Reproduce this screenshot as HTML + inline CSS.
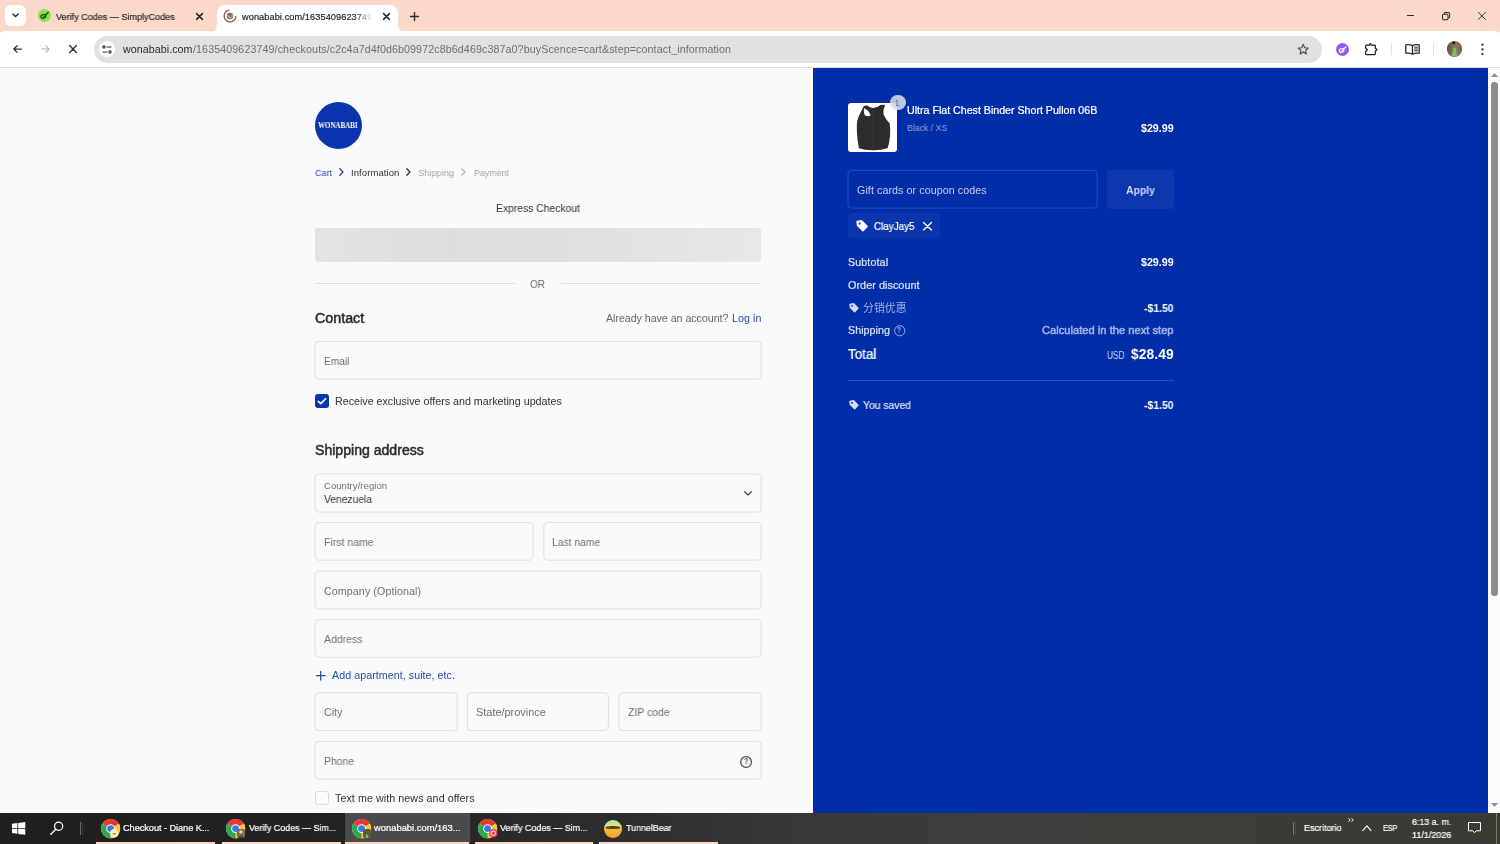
<!DOCTYPE html>
<html lang="en">
<head>
<meta charset="utf-8">
<title>Checkout - wonababi.com</title>
<style>

*{box-sizing:border-box;margin:0;padding:0}
html,body{width:1500px;height:844px;overflow:hidden;background:#f9fafc;font-family:"Liberation Sans",sans-serif}
body{position:relative}
.abs,.t,.box,svg{position:absolute}
.t{white-space:pre;display:block;transform-origin:0 50%;will-change:transform}
svg{overflow:visible}
/* browser chrome */
#tabstrip{left:0;top:0;width:1500px;height:32px;background:#fbd9ca}
#toolbar{left:0;top:31.2px;width:1500px;height:35.8px;background:#fff;border-radius:5px 5px 0 0}
#tbline{left:0;top:67px;width:1500px;height:1px;background:#dddde0}
#tabsearch{left:5px;top:5px;width:21px;height:21px;border-radius:6px;background:#fff}
#activetab{left:217px;top:5px;width:181px;height:28px;background:#fff;border-radius:8px 8px 0 0}
#omnibox{left:94px;top:36px;width:1228px;height:26.5px;border-radius:13.25px;background:#e1e1e1}
#siteinfo{left:98.8px;top:40.6px;width:16.6px;height:16.6px;border-radius:50%;background:#fff}
.sep{width:1px;height:12px;top:43px;background:#fad6c6}
/* page */
#main{left:0;top:68px;width:813px;height:745px;background:#f9fafc}
#aside{left:813px;top:68px;width:675px;height:745px;background:#002da8}
#scroll{left:1488px;top:68px;width:12px;height:745px;background:#fcfcfc}
#thumb{left:1491px;top:82px;width:6.5px;height:514px;border-radius:3.25px;background:#8c8b8d}
.box{border:1px solid #dfe0e2;border-radius:4px;background:#f9fafc}
#skel{left:315px;top:228.4px;width:446.4px;height:34px;border-radius:3px;background:linear-gradient(90deg,#e2e3e5 0%,#dcdddf 30%,#dfe0e2 62%,#e6e7e9 100%)}
.hr{height:1px;background:#dcdde0}
#logo{left:314.5px;top:102.3px;width:47px;height:47px;border-radius:50%;background:#0a34ad}
.cb{left:315px;width:14px;height:14px;border-radius:3px}
/* aside */
#pimg{left:848px;top:103px;width:49px;height:48.8px;border-radius:3px;background:#fff;overflow:hidden}
#badge{left:890.2px;top:94.6px;width:15.6px;height:15.6px;border-radius:50%;background:rgba(214,219,238,.88)}
#coupon{left:847.6px;top:170px;width:250px;height:39px;border:1px solid #2249b9;border-radius:4px}
#apply{left:1107px;top:170px;width:66.6px;height:39px;border-radius:3px;background:#0c37ad}
#chip{left:848px;top:213px;width:91.7px;height:24.6px;border-radius:3px;background:#0a35ac}
#adiv{left:848px;top:380px;width:325.6px;height:1px;background:#2a51bd}
/* taskbar */
#taskbar{left:0;top:813px;width:1500px;height:31px;background:linear-gradient(90deg,#1f1f1f 0%,#232323 22%,#2e2e2e 42%,#393939 55%,#3d3d3c 66%,#3c3c38 82%,#3a3b33 100%)}
#tbactive{left:344.5px;top:813px;width:125px;height:31px;background:#4b4b4b}
.ul{top:842px;height:2px;background:#f9d9c4}
.tsep{width:1px;height:12.5px;top:822px;background:#6a6a66}

</style>
</head>
<body>
<div id="tabstrip" class="abs"></div>
<div id="toolbar" class="abs"></div>
<div id="tbline" class="abs"></div>
<div id="tabsearch" class="abs"></div>
<svg style="left:12.3px;top:13.3px" width="7" height="5" viewBox="0 0 7 5"><path d="M0.8 0.9 L3.5 3.6 L6.2 0.9" fill="none" stroke="#2b2b2b" stroke-width="1.4" stroke-linecap="round" stroke-linejoin="round"/></svg>
<svg style="left:37.5px;top:9.2px" width="13" height="13" viewBox="0 0 13 13"><circle cx="6.5" cy="6.5" r="6.5" fill="#8be04e"/><ellipse cx="5.4" cy="7.4" rx="2.5" ry="1.9" fill="none" stroke="#1f5c12" stroke-width="1.3" transform="rotate(-20 5.4 7.4)"/><path d="M5.6 8.2 L10.2 3.2" stroke="#1f5c12" stroke-width="1.5" stroke-linecap="round"/></svg>
<span class="t" style="left:56.30px;top:11.00px;font-size:9.2px;line-height:12px;letter-spacing:0.000px;color:#2e2b2a;-webkit-text-stroke:0.22px #2e2b2a;transform:scaleX(0.9849);">Verify Codes — SimplyCodes</span>
<svg style="left:196.2px;top:12.5px" width="7" height="7" viewBox="0 0 7 7"><path d="M0.6 0.6 L6.4 6.4 M6.4 0.6 L0.6 6.4" stroke="#262626" stroke-width="1.5" stroke-linecap="round"/></svg>
<div id="activetab" class="abs"></div>
<svg style="left:209px;top:25px" width="8" height="8" viewBox="0 0 8 8"><path d="M8 0 L8 8 L0 8 A8 8 0 0 0 8 0 Z" fill="#fff"/></svg>
<svg style="left:398px;top:25px" width="8" height="8" viewBox="0 0 8 8"><path d="M0 0 L0 8 L8 8 A8 8 0 0 1 0 0 Z" fill="#fff"/></svg>
<svg style="left:222.7px;top:8.7px" width="14" height="14" viewBox="-7 -7 14 14"><path d="M-1 -5.8 A5.9 5.9 0 1 0 5.9 0.4" fill="none" stroke="#9b5b2f" stroke-width="1.3" stroke-linecap="round"/><circle r="3.3" fill="#6a6f76"/><path d="M-2.6 -1.2 Q-0.6 -0.2 -1.2 1.4 Q-0.2 2.4 1 1.6 Q2.6 0.8 2.2 -1.4" fill="none" stroke="#dfe3e8" stroke-width="0.9"/></svg>
<span class="t" style="left:242.20px;top:11.00px;font-size:9.2px;line-height:12px;letter-spacing:0.083px;color:#2a2a2a;-webkit-text-stroke:0.22px #2a2a2a;">wonababi.com/1635409623749</span>
<div class="abs" style="left:354px;top:8px;width:22px;height:17px;background:linear-gradient(90deg,rgba(255,255,255,0),#fff 85%)"></div>
<svg style="left:382.5px;top:12.5px" width="7" height="7" viewBox="0 0 7 7"><path d="M0.6 0.6 L6.4 6.4 M6.4 0.6 L0.6 6.4" stroke="#262626" stroke-width="1.5" stroke-linecap="round"/></svg>
<svg style="left:409.5px;top:11.5px" width="9" height="9" viewBox="0 0 9 9"><path d="M4.5 0.5 V8.5 M0.5 4.5 H8.5" stroke="#2b2b2b" stroke-width="1.4" stroke-linecap="round"/></svg>
<div class="abs" style="left:1406.5px;top:15px;width:7.6px;height:1px;background:#303030"></div>
<svg style="left:1442px;top:12px" width="8.2" height="8.2" viewBox="0 0 9 9"><rect x="0.6" y="2.4" width="6" height="6" rx="1.2" fill="none" stroke="#2b2b2b" stroke-width="1.1"/><path d="M2.6 2.2 V1.6 Q2.6 0.6 3.6 0.6 H7.2 Q8.4 0.6 8.4 1.8 V5.4 Q8.4 6.4 7.4 6.4 H6.8" fill="none" stroke="#2b2b2b" stroke-width="1.1"/></svg>
<svg style="left:1478.3px;top:12.1px" width="7.8" height="7.8" viewBox="0 0 9 9"><path d="M0.5 0.5 L8.5 8.5 M8.5 0.5 L0.5 8.5" stroke="#2b2b2b" stroke-width="1.1" stroke-linecap="round"/></svg>
<svg style="left:12.7px;top:45px" width="9" height="8.1" viewBox="0 0 10 9"><path d="M9.4 4.5 H1 M4.6 0.8 L0.9 4.5 L4.6 8.2" fill="none" stroke="#303030" stroke-width="1.4" stroke-linecap="round" stroke-linejoin="round"/></svg>
<svg style="left:40.7px;top:45px" width="9" height="8.1" viewBox="0 0 10 9"><path d="M0.6 4.5 H9 M5.4 0.8 L9.1 4.5 L5.4 8.2" fill="none" stroke="#b4b4b4" stroke-width="1.2" stroke-linecap="round" stroke-linejoin="round"/></svg>
<svg style="left:69.3px;top:45px" width="8" height="8" viewBox="0 0 8 8"><path d="M0.6 0.6 L7.4 7.4 M7.4 0.6 L0.6 7.4" stroke="#303030" stroke-width="1.4" stroke-linecap="round"/></svg>
<div id="omnibox" class="abs"></div>
<div id="siteinfo" class="abs"></div>
<svg style="left:102px;top:44.6px" width="10" height="9" viewBox="0 0 10 9"><circle cx="1.9" cy="2" r="1.1" fill="none" stroke="#303030" stroke-width="1.1"/><path d="M4.9 2 H9" stroke="#303030" stroke-width="1.2" stroke-linecap="round"/><circle cx="8" cy="7" r="1.1" fill="none" stroke="#303030" stroke-width="1.1"/><path d="M1 7 H5" stroke="#303030" stroke-width="1.2" stroke-linecap="round"/></svg>
<span class="t" style="left:123.10px;top:42.00px;font-size:10.7px;line-height:14px;letter-spacing:0.053px;color:#2a2a2e;">wonababi.com</span>
<span class="t" style="left:192.90px;top:42.00px;font-size:10.7px;line-height:14px;letter-spacing:0.096px;color:#6f6f72;">/1635409623749/checkouts/c2c4a7d4f0d6b09972c8b6d469c387a0?buyScence=cart&amp;step=contact_information</span>
<svg style="left:1297px;top:43px" width="12.5" height="12.5" viewBox="0 0 24 24"><path d="M12 2.6 L14.8 9 L21.7 9.6 L16.5 14.2 L18 21 L12 17.4 L6 21 L7.5 14.2 L2.3 9.6 L9.2 9 Z" fill="none" stroke="#444" stroke-width="2" stroke-linejoin="round"/></svg>
<svg style="left:1335.5px;top:42.8px" width="13" height="13" viewBox="0 0 13 13"><circle cx="6.5" cy="6.5" r="6.5" fill="#8f5cf2"/><ellipse cx="5.6" cy="7.5" rx="2.3" ry="1.8" fill="none" stroke="#fff" stroke-width="1.1" transform="rotate(-20 5.6 7.5)"/><path d="M5.8 8.2 L9.8 3.8" stroke="#fff" stroke-width="1.2" stroke-linecap="round"/></svg>
<svg style="left:1364px;top:41.5px" width="14" height="14" viewBox="0 0 14 14"><path d="M2.4 3.1 H5.5 Q5.6 1.7 6.4 1.7 Q7.2 1.7 7.3 3.1 H10.6 Q11.4 3.1 11.4 3.9 V6.7 Q12.9 6.8 12.9 7.8 Q12.9 8.8 11.4 8.9 V11.8 Q11.400 12.600 10.600 12.600 H2.400 Q1.600 12.600 1.600 11.800 V9.600 L3.300 7.800 L1.600 6 V3.900 Q1.600 3.100 2.400 3.100 Z" fill="none" stroke="#262626" stroke-width="1.3" stroke-linejoin="round"/></svg>
<div class="abs sep" style="left:1391px"></div>
<svg style="left:1405px;top:43.5px" width="15" height="11" viewBox="0 0 15 11"><path d="M7.5 1.6 Q4.6 0.2 0.8 0.9 V9.2 Q4.6 8.6 7.5 10.2 Q10.4 8.6 14.2 9.2 V0.9 Q10.4 0.2 7.5 1.6 Z M7.5 1.6 V10" fill="none" stroke="#2b2b2b" stroke-width="1.3" stroke-linejoin="round"/><path d="M9.2 3.2 H12.9 M9.2 5 H12.900 M9.200 6.800 H12.900" stroke="#2b2b2b" stroke-width="1"/></svg>
<div class="abs sep" style="left:1433px"></div>
<div class="abs" style="left:1447px;top:41.4px;width:15.4px;height:15.4px;border-radius:50%;overflow:hidden;background:linear-gradient(90deg,#5b4c3c 0%,#7a6a55 32%,#8f7759 68%,#6d5b47 100%)"><svg style="left:0;top:0" width="15.4" height="15.4" viewBox="0 0 15.4 15.4"><path d="M6.300 6.400 L8.700 6.400 L10.200 15.400 L4.600 15.400 Z" fill="#79bd60"/><ellipse cx="6.8" cy="1.900" rx="1.500" ry="1.600" fill="#241a14"/><path d="M6.200 3.200 L8 3.200 L8.600 6.400 L6.300 6.400 Z" fill="#8b7a66"/></svg></div>
<svg style="left:1481px;top:43.2px" width="3" height="13" viewBox="0 0 3 13"><circle cx="1.5" cy="1.7" r="1.15" fill="#2b2b2b"/><circle cx="1.5" cy="6.4" r="1.15" fill="#2b2b2b"/><circle cx="1.5" cy="11.1" r="1.15" fill="#2b2b2b"/></svg>
<div id="main" class="abs"></div>
<svg style="left:0;top:0" width="1500" height="844" fill="none"><rect x="315.10" y="341.40" width="446.10" height="37.60" rx="3.6" stroke="#d8d9dc" stroke-width="0.8"/><rect x="315.10" y="474.00" width="446.10" height="38.10" rx="3.6" stroke="#d8d9dc" stroke-width="0.8"/><rect x="315.10" y="522.50" width="217.90" height="37.70" rx="3.6" stroke="#d8d9dc" stroke-width="0.8"/><rect x="543.80" y="522.50" width="217.40" height="37.70" rx="3.6" stroke="#d8d9dc" stroke-width="0.8"/><rect x="315.10" y="571.10" width="446.10" height="37.80" rx="3.6" stroke="#d8d9dc" stroke-width="0.8"/><rect x="315.10" y="619.60" width="446.10" height="37.60" rx="3.6" stroke="#d8d9dc" stroke-width="0.8"/><rect x="315.10" y="692.80" width="142.10" height="37.80" rx="3.6" stroke="#d8d9dc" stroke-width="0.8"/><rect x="467.40" y="692.80" width="141.00" height="37.80" rx="3.6" stroke="#d8d9dc" stroke-width="0.8"/><rect x="619.00" y="692.80" width="142.20" height="37.80" rx="3.6" stroke="#d8d9dc" stroke-width="0.8"/><rect x="315.10" y="741.40" width="446.10" height="37.60" rx="3.6" stroke="#d8d9dc" stroke-width="0.8"/></svg>
<div id="logo" class="abs"></div>
<span class="t" style="left:318.40px;top:120.00px;font-size:7.6px;line-height:11px;letter-spacing:0.000px;color:#fff;font-weight:700;font-family:'Liberation Serif', serif;transform:scaleX(0.9199);">WONABABI</span>
<span class="t" style="left:314.50px;top:166.00px;font-size:9.5px;line-height:13px;letter-spacing:0.000px;color:#2b4aa3;transform:scaleX(0.9469);">Cart</span>
<svg style="left:338.6px;top:168.2px" width="5" height="8" viewBox="0 0 5 8"><path d="M0.8 0.8 L4 4 L0.8 7.2" fill="none" stroke="#2b4aa3" stroke-width="1.4" stroke-linecap="round" stroke-linejoin="round"/></svg>
<span class="t" style="left:350.60px;top:166.00px;font-size:9.5px;line-height:13px;letter-spacing:0.077px;color:#333333;">Information</span>
<svg style="left:405.7px;top:168.2px" width="5" height="8" viewBox="0 0 5 8"><path d="M0.8 0.8 L4 4 L0.8 7.2" fill="none" stroke="#333" stroke-width="1.4" stroke-linecap="round" stroke-linejoin="round"/></svg>
<span class="t" style="left:417.80px;top:166.00px;font-size:9.5px;line-height:13px;letter-spacing:0.000px;color:#a4a5ab;transform:scaleX(0.9761);">Shipping</span>
<svg style="left:461.2px;top:168.2px" width="5" height="8" viewBox="0 0 5 8"><path d="M0.8 0.8 L4 4 L0.8 7.2" fill="none" stroke="#a4a5ab" stroke-width="1.1" stroke-linecap="round" stroke-linejoin="round"/></svg>
<span class="t" style="left:473.60px;top:166.00px;font-size:9.5px;line-height:13px;letter-spacing:0.000px;color:#a4a5ab;transform:scaleX(0.9307);">Payment</span>
<span class="t" style="left:495.60px;top:201.00px;font-size:10.7px;line-height:14px;letter-spacing:0.000px;color:#333333;transform:scaleX(0.9685);">Express Checkout</span>
<div id="skel" class="abs"></div>
<div class="abs hr" style="left:315px;top:283px;width:199.5px"></div>
<div class="abs hr" style="left:560.5px;top:283px;width:200.5px"></div>
<span class="t" style="left:530.00px;top:277.00px;font-size:10.7px;line-height:14px;letter-spacing:0.000px;color:#6a6a6a;transform:scaleX(0.9357);">OR</span>
<span class="t" style="left:314.80px;top:310.00px;font-size:13.8px;line-height:17px;letter-spacing:0.000px;color:#2b2b2b;-webkit-text-stroke:0.5px #2b2b2b;transform:scaleX(1.0344);">Contact</span>
<span class="t" style="left:605.60px;top:311.00px;font-size:10.7px;line-height:14px;letter-spacing:-0.052px;color:#666;">Already have an account?</span>
<span class="t" style="left:731.60px;top:311.00px;font-size:10.7px;line-height:14px;letter-spacing:0.055px;color:#2b4aa3;">Log in</span>
<span class="t" style="left:324.00px;top:354.00px;font-size:10.7px;line-height:14px;letter-spacing:0.000px;color:#707070;transform:scaleX(0.9501);">Email</span>
<div class="abs cb" style="top:394px;background:#0a34ad"></div>
<svg style="left:315px;top:394px" width="14" height="14" viewBox="0 0 14 14"><path d="M3.2 7.3 L5.8 9.6 L10.7 4.7" fill="none" stroke="#fff" stroke-width="1.6" stroke-linecap="round" stroke-linejoin="round"/></svg>
<span class="t" style="left:334.90px;top:394.00px;font-size:10.7px;line-height:14px;letter-spacing:0.000px;color:#333333;">Receive exclusive offers and marketing updates</span>
<span class="t" style="left:314.80px;top:442.00px;font-size:13.8px;line-height:17px;letter-spacing:0.000px;color:#2b2b2b;-webkit-text-stroke:0.5px #2b2b2b;transform:scaleX(1.0204);">Shipping address</span>
<span class="t" style="left:324.00px;top:479.00px;font-size:9.5px;line-height:13px;letter-spacing:0.053px;color:#707070;">Country/region</span>
<span class="t" style="left:324.00px;top:492.00px;font-size:10.7px;line-height:14px;letter-spacing:0.000px;color:#333333;transform:scaleX(0.9615);">Venezuela</span>
<svg style="left:744.2px;top:490.6px" width="8" height="5" viewBox="0 0 8 5"><path d="M0.7 0.7 L4 4 L7.3 0.7" fill="none" stroke="#444" stroke-width="1.3" stroke-linecap="round" stroke-linejoin="round"/></svg>
<span class="t" style="left:324.00px;top:535.00px;font-size:10.7px;line-height:14px;letter-spacing:0.000px;color:#707070;transform:scaleX(0.9825);">First name</span>
<span class="t" style="left:552.40px;top:535.00px;font-size:10.7px;line-height:14px;letter-spacing:0.000px;color:#707070;transform:scaleX(0.9658);">Last name</span>
<span class="t" style="left:324.00px;top:584.00px;font-size:10.7px;line-height:14px;letter-spacing:0.080px;color:#707070;">Company (Optional)</span>
<span class="t" style="left:324.00px;top:632.00px;font-size:10.7px;line-height:14px;letter-spacing:0.000px;color:#707070;transform:scaleX(0.9791);">Address</span>
<svg style="left:315.6px;top:670.7px" width="9.4" height="9.4" viewBox="0 0 9.4 9.4"><path d="M4.7 0.4 V9 M0.4 4.7 H9" stroke="#2b4aa3" stroke-width="1.3" stroke-linecap="round"/></svg>
<span class="t" style="left:332.00px;top:668.00px;font-size:10.7px;line-height:14px;letter-spacing:0.048px;color:#2b4aa3;">Add apartment, suite, etc.</span>
<span class="t" style="left:324.00px;top:705.00px;font-size:10.7px;line-height:14px;letter-spacing:0.000px;color:#707070;transform:scaleX(0.9779);">City</span>
<span class="t" style="left:475.60px;top:705.00px;font-size:10.7px;line-height:14px;letter-spacing:0.000px;color:#707070;transform:scaleX(1.0215);">State/province</span>
<span class="t" style="left:628.00px;top:705.00px;font-size:10.7px;line-height:14px;letter-spacing:0.000px;color:#707070;transform:scaleX(0.9770);">ZIP code</span>
<span class="t" style="left:324.00px;top:754.00px;font-size:10.7px;line-height:14px;letter-spacing:0.000px;color:#707070;transform:scaleX(0.9707);">Phone</span>
<svg style="left:740px;top:755.7px" width="12.2" height="12.2" viewBox="0 0 12.2 12.2"><circle cx="6.1" cy="6.1" r="5.4" fill="none" stroke="#505050" stroke-width="1.3"/></svg>
<span class="t" style="left:744.10px;top:756.00px;font-size:8.2px;line-height:11px;letter-spacing:0.000px;color:#4a4a4a;font-weight:700;transform:scaleX(0.8374);">?</span>
<div class="abs cb" style="top:791px;background:#fdfdfe;border:1px solid #dadbde"></div>
<span class="t" style="left:334.80px;top:791.00px;font-size:10.7px;line-height:14px;letter-spacing:0.073px;color:#333333;">Text me with news and offers</span>
<div id="aside" class="abs"></div>
<div id="pimg" class="abs"><svg style="left:0;top:0" width="49" height="49" viewBox="0 0 49 49"><path d="M15.9 2.9 Q17.5 2.2 19.2 2.6 Q22 5.2 25.5 5 Q29.5 4.4 32.5 2.1 Q35 1.4 37.1 1.9 Q34.8 7 35.5 11.2 Q37.5 16.5 41.6 20.3 Q42.6 27 42 33.6 Q41.4 40 39.6 45.2 Q32 47.6 25 47.3 Q17 47.4 10.9 45.2 Q9.2 37 8.9 28.6 Q8.6 22 9.3 17.8 Q10.6 12.5 13 8.7 Q14.4 5.5 15.9 2.9 Z" fill="#2c2c2e"/><path d="M16 5.2 Q15.4 9 16.7 12 Q18.8 13.6 20.9 13.3 Q22.2 12.9 22.6 12 Q21.6 9 19.2 7 Q17.4 5.6 16 5.2 Z" fill="#fff"/><path d="M25 8 Q24 28 26 46" stroke="#3a3a3d" stroke-width="1.2" fill="none" opacity=".6"/></svg></div>
<div id="badge" class="abs"></div>
<span class="t" style="left:895.40px;top:97.00px;font-size:9.2px;line-height:12px;letter-spacing:-0.625px;color:#4d5572;transform:scaleX(0.8000);">1</span>
<span class="t" style="left:906.70px;top:103.00px;font-size:10.7px;line-height:14px;letter-spacing:-0.025px;color:#fff;-webkit-text-stroke:0.22px #fff;">Ultra Flat Chest Binder Short Pullon 06B</span>
<span class="t" style="left:906.70px;top:122.00px;font-size:9.3px;line-height:12px;letter-spacing:0.000px;color:#93a4dd;transform:scaleX(0.9396);">Black / XS</span>
<span class="t" style="left:1141.00px;top:121.00px;font-size:10.7px;line-height:14px;letter-spacing:-0.021px;color:#fff;font-weight:700;">$29.99</span>
<svg style="left:0;top:0" width="1500" height="300" fill="none"><rect x="848.0" y="170.4" width="249.2" height="37.7" rx="3.6" stroke="#2f55c2" stroke-width="0.8"/></svg>
<span class="t" style="left:856.70px;top:183.00px;font-size:10.7px;line-height:14px;letter-spacing:0.079px;color:#c6cfee;">Gift cards or coupon codes</span>
<div id="apply" class="abs"></div>
<span class="t" style="left:1126.00px;top:183.00px;font-size:10.7px;line-height:14px;letter-spacing:0.000px;color:#cfd8f6;font-weight:700;transform:scaleX(0.9763);">Apply</span>
<div id="chip" class="abs"></div>
<svg style="left:855.7px;top:220.0px" width="12" height="12" viewBox="0 0 12 12"><path d="M0.4 1.6 Q0.3 0.9 1 0.8 L5.4 0.1 Q5.9 0 6.3 0.4 L11.6 5.7 Q12.1 6.3 11.6 6.9 L7.5 11.3 Q6.9 11.9 6.3 11.3 L1.1 6.1 Q0.8 5.8 0.8 5.4 Z M3.7 2.4 a1 1 0 1 0 0.01 0 Z" fill="#fff" fill-rule="evenodd"/></svg>
<span class="t" style="left:873.80px;top:219.00px;font-size:10.7px;line-height:14px;letter-spacing:0.000px;color:#fff;-webkit-text-stroke:0.22px #fff;transform:scaleX(0.9211);">ClayJay5</span>
<svg style="left:923px;top:222px" width="9" height="8.4" viewBox="0 0 9 8.4"><path d="M0.5 0.4 L8.5 8 M8.5 0.4 L0.5 8" stroke="#fff" stroke-width="1.35" stroke-linecap="round"/></svg>
<span class="t" style="left:847.60px;top:255.00px;font-size:10.7px;line-height:14px;letter-spacing:0.112px;color:#dae0f6;-webkit-text-stroke:0.22px #dae0f6;">Subtotal</span>
<span class="t" style="left:1141.00px;top:255.00px;font-size:10.7px;line-height:14px;letter-spacing:-0.021px;color:#fff;font-weight:700;">$29.99</span>
<span class="t" style="left:847.60px;top:278.00px;font-size:10.7px;line-height:14px;letter-spacing:0.000px;color:#dae0f6;-webkit-text-stroke:0.22px #dae0f6;transform:scaleX(1.0213);">Order discount</span>
<svg style="left:848.6px;top:303.4px" width="9.8" height="9.8" viewBox="0 0 12 12"><path d="M0.4 1.6 Q0.3 0.9 1 0.8 L5.4 0.1 Q5.9 0 6.3 0.4 L11.6 5.7 Q12.1 6.3 11.6 6.9 L7.5 11.3 Q6.9 11.9 6.3 11.3 L1.1 6.1 Q0.8 5.8 0.8 5.4 Z M3.7 2.4 a1 1 0 1 0 0.01 0 Z" fill="#d3dbf3" fill-rule="evenodd"/></svg>
<span class="t" style="left:863.00px;top:301.00px;font-size:10.9px;line-height:14px;letter-spacing:0.007px;color:#a0b1e5;font-family:'Liberation Sans', 'Noto Sans CJK SC', sans-serif;">分销优惠</span>
<span class="t" style="left:1144.00px;top:301.00px;font-size:10.7px;line-height:14px;letter-spacing:0.000px;color:#fff;font-weight:700;transform:scaleX(0.9765);">-$1.50</span>
<span class="t" style="left:847.60px;top:323.00px;font-size:10.7px;line-height:14px;letter-spacing:0.056px;color:#dae0f6;-webkit-text-stroke:0.22px #dae0f6;">Shipping</span>
<svg style="left:893.5px;top:324.9px" width="11.4" height="11.4" viewBox="0 0 11.4 11.4"><circle cx="5.7" cy="5.7" r="5.1" fill="none" stroke="#a0b1e5" stroke-width="1"/></svg>
<span class="t" style="left:897.20px;top:324.00px;font-size:8.4px;line-height:12px;letter-spacing:-0.125px;color:#a0b1e5;font-weight:700;transform:scaleX(0.8000);">?</span>
<span class="t" style="left:1042.00px;top:323.00px;font-size:10.7px;line-height:14px;letter-spacing:0.000px;color:#a0b1e5;-webkit-text-stroke:0.5px #a0b1e5;transform:scaleX(1.0447);">Calculated in the next step</span>
<span class="t" style="left:848.00px;top:346.00px;font-size:13.8px;line-height:17px;letter-spacing:0.000px;color:#fff;-webkit-text-stroke:0.22px #fff;transform:scaleX(0.9741);">Total</span>
<span class="t" style="left:1106.80px;top:349.00px;font-size:10.2px;line-height:13px;letter-spacing:0.000px;color:#d3dbf3;transform:scaleX(0.8180);">USD</span>
<span class="t" style="left:1131.00px;top:346.00px;font-size:13.8px;line-height:17px;letter-spacing:0.079px;color:#fff;font-weight:700;">$28.49</span>
<div id="adiv" class="abs"></div>
<svg style="left:848.6px;top:400.0px" width="9.8" height="9.8" viewBox="0 0 12 12"><path d="M0.4 1.6 Q0.3 0.9 1 0.8 L5.4 0.1 Q5.9 0 6.3 0.4 L11.6 5.7 Q12.1 6.3 11.6 6.9 L7.5 11.3 Q6.9 11.9 6.3 11.3 L1.1 6.1 Q0.8 5.8 0.8 5.4 Z M3.7 2.4 a1 1 0 1 0 0.01 0 Z" fill="#d3dbf3" fill-rule="evenodd"/></svg>
<span class="t" style="left:863.00px;top:398.00px;font-size:10.7px;line-height:14px;letter-spacing:0.000px;color:#dae0f6;-webkit-text-stroke:0.22px #dae0f6;transform:scaleX(0.9691);">You saved</span>
<span class="t" style="left:1144.00px;top:398.00px;font-size:10.7px;line-height:14px;letter-spacing:0.000px;color:#fff;font-weight:700;transform:scaleX(0.9765);">-$1.50</span>
<div id="scroll" class="abs"></div>
<div id="thumb" class="abs"></div>
<svg style="left:1490.6px;top:72.6px" width="7" height="4" viewBox="0 0 7 4"><path d="M0 4 L3.5 0 L7 4 Z" fill="#8c8b8d"/></svg>
<svg style="left:1490.6px;top:802.8px" width="7" height="4" viewBox="0 0 7 4"><path d="M0 0 L3.5 4 L7 0 Z" fill="#8c8b8d"/></svg>
<div id="taskbar" class="abs"></div>
<div id="tbactive" class="abs"></div>
<svg style="left:12px;top:821.6px" width="13.3" height="12.8" viewBox="0 0 13.3 12.8"><path d="M0 1.8 L5.4 1 V6 H0 Z M6.2 0.9 L13.3 0 V6 H6.2 Z M0 6.8 H5.4 V11.8 L0 11 Z M6.2 6.8 H13.3 V12.8 L6.2 11.9 Z" fill="#fff"/></svg>
<svg style="left:49.5px;top:821px" width="14" height="14" viewBox="0 0 14 14"><circle cx="8.6" cy="5.2" r="4.1" fill="none" stroke="#fff" stroke-width="1.2"/><path d="M5.8 8.2 L0.8 13.2" stroke="#fff" stroke-width="1.3" stroke-linecap="round"/></svg>
<div class="abs tsep" style="left:80px"></div><div class="abs tsep" style="left:82px;background:#3c3c3c"></div>
<svg style="left:100.7px;top:818.8px" width="19.2" height="19.2" viewBox="-10 -10 20 20"><circle r="10" fill="#fff"/><path d="M0 0 L-8.66 -5 A10 10 0 0 1 8.66 -5 Z" fill="#e33b2e"/><path d="M0 0 L8.66 -5 A10 10 0 0 1 0 10 Z" fill="#fcc934"/><path d="M0 0 L0 10 A10 10 0 0 1 -8.66 -5 Z" fill="#2da94f"/><circle r="4.6" fill="#fff"/><circle r="3.6" fill="#3b78e7"/></svg>
<svg style="left:110.4px;top:829.3px" width="8.600" height="8.600" viewBox="0 0 8.600 8.600"><circle cx="4.300" cy="4.300" r="4.300" fill="#fff4b4"/><path d="M2.400 5 Q3 3.400 4.300 4.300 Q5.600 3 6.200 5 Q4.300 6.400 2.400 5 Z" fill="#d9822b"/></svg>
<span class="t" style="left:122.90px;top:822.00px;font-size:9.2px;line-height:12px;letter-spacing:-0.046px;color:#fff;-webkit-text-stroke:0.22px #fff;">Checkout - Diane K...</span>
<svg style="left:226.2px;top:818.8px" width="19.2" height="19.2" viewBox="-10 -10 20 20"><circle r="10" fill="#fff"/><path d="M0 0 L-8.66 -5 A10 10 0 0 1 8.66 -5 Z" fill="#e33b2e"/><path d="M0 0 L8.66 -5 A10 10 0 0 1 0 10 Z" fill="#fcc934"/><path d="M0 0 L0 10 A10 10 0 0 1 -8.66 -5 Z" fill="#2da94f"/><circle r="4.6" fill="#fff"/><circle r="3.6" fill="#3b78e7"/></svg>
<svg style="left:237px;top:829px" width="8" height="9" viewBox="0 0 8 9"><rect width="8" height="9" rx="2" fill="#7b6a55"/><circle cx="4" cy="3" r="1.8" fill="#e9c9a8"/><path d="M1 9 Q4 4 7 9 Z" fill="#3f4a3b"/></svg>
<span class="t" style="left:248.80px;top:822.00px;font-size:9.2px;line-height:12px;letter-spacing:0.000px;color:#fff;-webkit-text-stroke:0.22px #fff;transform:scaleX(0.9702);">Verify Codes — Sim...</span>
<svg style="left:352.3px;top:818.8px" width="19.2" height="19.2" viewBox="-10 -10 20 20"><circle r="10" fill="#fff"/><path d="M0 0 L-8.66 -5 A10 10 0 0 1 8.66 -5 Z" fill="#e33b2e"/><path d="M0 0 L8.66 -5 A10 10 0 0 1 0 10 Z" fill="#fcc934"/><path d="M0 0 L0 10 A10 10 0 0 1 -8.66 -5 Z" fill="#2da94f"/><circle r="4.6" fill="#fff"/><circle r="3.6" fill="#3b78e7"/></svg>
<svg style="left:363px;top:829px" width="8" height="9" viewBox="0 0 8 9"><rect width="8" height="9" rx="2" fill="#5d5a3c"/><path d="M2.5 9 Q4 1 5.5 9 Z" fill="#86b95e"/></svg>
<span class="t" style="left:374.40px;top:822.00px;font-size:9.2px;line-height:12px;letter-spacing:0.000px;color:#fff;-webkit-text-stroke:0.22px #fff;transform:scaleX(1.0213);">wonababi.com/163...</span>
<svg style="left:478.1px;top:818.8px" width="19.2" height="19.2" viewBox="-10 -10 20 20"><circle r="10" fill="#fff"/><path d="M0 0 L-8.66 -5 A10 10 0 0 1 8.66 -5 Z" fill="#e33b2e"/><path d="M0 0 L8.66 -5 A10 10 0 0 1 0 10 Z" fill="#fcc934"/><path d="M0 0 L0 10 A10 10 0 0 1 -8.66 -5 Z" fill="#2da94f"/><circle r="4.6" fill="#fff"/><circle r="3.6" fill="#3b78e7"/></svg>
<svg style="left:488.5px;top:829px" width="8.5" height="8.5" viewBox="0 0 9 9"><circle cx="4.5" cy="4.5" r="4.5" fill="#e8405a"/><circle cx="4.5" cy="4.5" r="2.4" fill="none" stroke="#fff" stroke-width="1"/></svg>
<span class="t" style="left:500.00px;top:822.00px;font-size:9.2px;line-height:12px;letter-spacing:0.000px;color:#fff;-webkit-text-stroke:0.22px #fff;transform:scaleX(0.9747);">Verify Codes — Sim...</span>
<div class="abs" style="left:604.3px;top:819.9px;width:17.8px;height:18.2px;border-radius:50%;overflow:hidden;background:linear-gradient(180deg,#c4e286 0%,#cde88f 36%,#f4bd3c 40%,#f2b02e 72%,#eea42b 100%)"><svg style="left:0;top:0" width="17.8" height="18.2" viewBox="0 0 17.8 18.2"><ellipse cx="8.9" cy="7.500" rx="7.500" ry="1.400" fill="#4a2d08"/><ellipse cx="8.9" cy="7.900" rx="6.800" ry="0.800" fill="#6b4210"/></svg></div>
<span class="t" style="left:626.40px;top:822.00px;font-size:9.2px;line-height:12px;letter-spacing:0.000px;color:#fff;-webkit-text-stroke:0.22px #fff;transform:scaleX(0.9667);">TunnelBear</span>
<div class="abs ul" style="left:96px;width:119px"></div>
<div class="abs ul" style="left:221.8px;width:119.0px"></div>
<div class="abs ul" style="left:344.8px;width:124.4px"></div>
<div class="abs ul" style="left:474.5px;width:118.0px"></div>
<div class="abs ul" style="left:599px;width:119px"></div>
<div class="abs tsep" style="left:1292.5px;background:#77786f"></div><div class="abs tsep" style="left:1294.5px;background:#4a4b43"></div>
<span class="t" style="left:1303.50px;top:822.00px;font-size:9.2px;line-height:12px;letter-spacing:0.000px;color:#fff;-webkit-text-stroke:0.22px #fff;transform:scaleX(0.9792);">Escritorio</span>
<svg style="left:1347.7px;top:818.3px" width="6.2" height="4" viewBox="0 0 6.2 4"><path d="M0.4 0.3 L2.3 2 L0.4 3.7 M3.4 0.3 L5.3 2 L3.4 3.7" fill="none" stroke="#fff" stroke-width="0.9"/></svg>
<svg style="left:1362.4px;top:825.4px" width="9.8" height="6.4" viewBox="0 0 9.8 6.4"><path d="M0.5 5.9 L4.9 0.8 L9.3 5.9" fill="none" stroke="#fff" stroke-width="1.1"/></svg>
<span class="t" style="left:1383.00px;top:822.00px;font-size:9.2px;line-height:12px;letter-spacing:-0.258px;color:#fff;-webkit-text-stroke:0.22px #fff;transform:scaleX(0.8000);">ESP</span>
<span class="t" style="left:1411.70px;top:816.00px;font-size:9.2px;line-height:12px;letter-spacing:0.000px;color:#fff;-webkit-text-stroke:0.22px #fff;transform:scaleX(0.9594);">6:13 a. m.</span>
<span class="t" style="left:1411.90px;top:829.00px;font-size:9.2px;line-height:12px;letter-spacing:0.000px;color:#fff;-webkit-text-stroke:0.22px #fff;transform:scaleX(0.9800);">11/1/2026</span>
<svg style="left:1468px;top:822px" width="13" height="12" viewBox="0 0 13 12"><path d="M0.5 0.5 H12.5 V8.8 H8.2 L6.5 10.8 L4.8 8.8 H0.5 Z" fill="none" stroke="#fff" stroke-width="1"/></svg>
<div class="abs" style="left:1496px;top:813px;width:1px;height:31px;background:#7a7b73"></div>
</body>
</html>
